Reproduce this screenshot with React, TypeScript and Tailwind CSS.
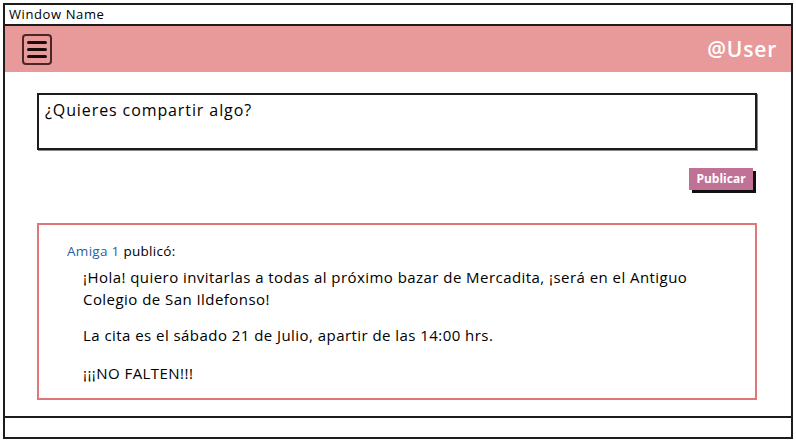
import React from "react";

export default function App() {
  return (
    <div className="w-[796px] h-[444px] bg-white relative overflow-hidden" style={{ fontFamily: '"Open Sans", "Noto Sans", sans-serif' }}>
      <div className="ml-[3px] mt-[3px] w-[790px] h-[436px] border-2 border-[#1c1c1c] flex flex-col">
        <div className="h-[19px] flex items-center pl-[4px] text-[13px] tracking-[0.6px] text-black leading-none">Window Name</div>
        <div className="h-[2px] bg-[#1c1c1c]" />
        <div className="h-[46px] bg-[#e8999a] flex items-center justify-between pl-[17px] pr-[14px]">
          <div className="w-[30px] h-[31px] border-2 border-[#4a2626] rounded-[4px] flex flex-col items-center justify-center gap-[4px]">
            <div className="w-[20px] h-[3px] bg-[#1a0a0a] rounded-full" />
            <div className="w-[20px] h-[3px] bg-[#1a0a0a] rounded-full" />
            <div className="w-[20px] h-[3px] bg-[#1a0a0a] rounded-full" />
          </div>
          <div className="text-white text-[21px] font-semibold tracking-[0.8px] leading-none">@User</div>
        </div>
        <div className="flex-1 flex flex-col pl-[32px] pr-[34px] pt-[21px]">
          <div className="h-[57px] border-2 border-[#1c1c1c] shadow-[1px_1px_0_#888] px-[6px] pt-[3px] text-[16px] tracking-[0.9px] text-black">
            ¿Quieres compartir algo?
          </div>
          <div className="flex justify-end mt-[18px] pr-[4px]">
            <div className="w-[64px] h-[22px] bg-[#c07196] text-white text-[12px] font-bold flex items-center justify-center shadow-[3px_3px_0_#111]">
              Publicar
            </div>
          </div>
          <div className="mt-[33px] h-[177px] border-2 border-[#e07676] pl-[28px] pt-[16px] text-black">
            <div className="text-[13.5px] tracking-[0.3px]">
              <span className="text-[#2d5f9e]">Amiga 1</span> publicó:
            </div>
            <div className="pl-[16px] pt-[5px] text-[15px] tracking-[0.45px] leading-[22px]">
              <p>¡Hola! quiero invitarlas a todas al próximo bazar de Mercadita, ¡será en el Antiguo<br />Colegio de San Ildefonso!</p>
              <p className="mt-[14px]">La cita es el sábado 21 de Julio, apartir de las 14:00 hrs.</p>
              <p className="mt-[16px]">¡¡¡NO FALTEN!!!</p>
            </div>
          </div>
        </div>
        <div className="h-[2px] bg-[#1c1c1c]" />
        <div className="h-[19px]" />
      </div>
    </div>
  );
}
